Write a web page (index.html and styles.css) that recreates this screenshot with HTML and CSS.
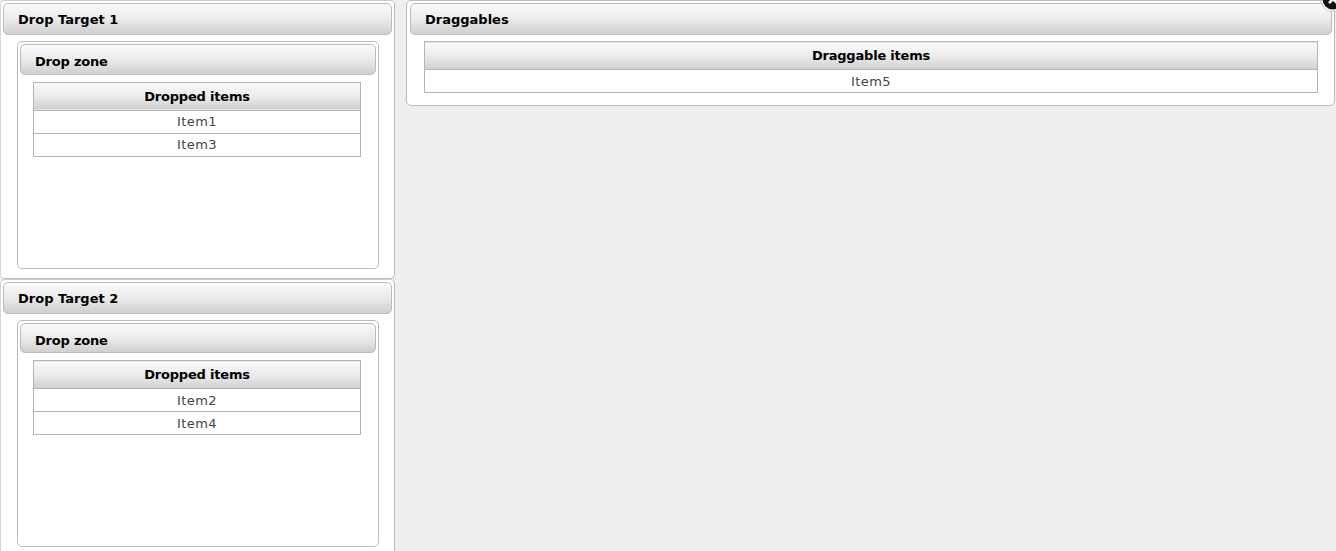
FILE: index.html
```html
<!DOCTYPE html>
<html lang="en">
<head>
	<meta charset="UTF-8" />
	<title>Drag and drop</title>
	<link rel="stylesheet" href="styles.css">
</head>
<body>
	<div class="left-column">
		<div class="panel target-panel">
			<div class="panel-header">Drop Target 1</div>
			<div class="zone-panel">
				<div class="panel-header zone-header">Drop zone</div>
				<table class="item-table">
					<tr><th>Dropped items</th></tr>
					<tr><td>Item1</td></tr>
					<tr><td>Item3</td></tr>
				</table>
			</div>
		</div>
		<div class="panel target-panel">
			<div class="panel-header">Drop Target 2</div>
			<div class="zone-panel">
				<div class="panel-header zone-header">Drop zone</div>
				<table class="item-table">
					<tr><th>Dropped items</th></tr>
					<tr><td>Item2</td></tr>
					<tr><td>Item4</td></tr>
				</table>
			</div>
		</div>
	</div>

	<div class="panel source-panel">
		<div class="panel-header">Draggables</div>
		<table class="item-table source-table">
			<tr><th>Draggable items</th></tr>
			<tr><td>Item5</td></tr>
		</table>
	</div>

	<svg class="close-icon" width="24" height="20" viewBox="0 0 24 20">
		<circle cx="21" cy="-1" r="13" fill="#bbb" opacity="0.5" />
		<circle cx="21" cy="-1" r="11.5" fill="#fff" />
		<circle cx="21" cy="-1" r="10.5" fill="#111" />
		<path d="M17 3 L25 -5 M17 -5 L25 3" stroke="#fff" stroke-width="2.6" />
	</svg>
</body>
</html>
```

FILE: styles.css
```css
html, body {
	height: 100%;
	margin: 0;
	overflow: hidden;
}
body {
	display: flex;
	align-items: flex-start;
	gap: 11px;
	box-sizing: border-box;
	height: 551px;
	background-color: #eeeff1;
	font-family: "DejaVu Sans", Verdana, sans-serif;
	font-size: 13px;
	color: #000;
}
.left-column {
	display: flex;
	flex-direction: column;
	width: 395px;
	flex: none;
}
.panel {
	box-sizing: border-box;
	padding: 2px;
	background-color: #fff;
	border: 1px solid #bbb;
	border-radius: 5px;
}
.target-panel {
	height: 278.5px;
	flex: none;
	border-top-color: #ccc;
	border-left-color: #d8d8d8;
}
.source-panel {
	width: 929px;
	height: 106px;
	flex: none;
	padding: 2px 2px 2px 3px;
}
.panel-header {
	box-sizing: border-box;
	height: 32px;
	padding-left: 14px;
	line-height: 32.8px;
	font-weight: bold;
	border: 1px solid #bbb;
	border-radius: 5px;
	background: linear-gradient(to bottom, #fafafa 0%, #ebebeb 50%, #cfcfcf 100%);
}
.zone-panel {
	box-sizing: border-box;
	height: 227.5px;
	margin: 6px 13px 0 14px;
	padding: 2px;
	border: 1px solid #bbb;
	border-radius: 5px;
}
.zone-header {
	height: 30.8px;
	line-height: 33px;
	letter-spacing: -0.2px;
}
.item-table {
	width: 328px;
	margin: 7px 0 0 13px;
	border-collapse: collapse;
	table-layout: fixed;
}
.source-table {
	width: 894px;
	margin: 6px 0 0 14px;
}
.item-table th, .item-table td {
	box-sizing: border-box;
	padding: 0;
	text-align: center;
	border: 1px solid #b5b5b5;
}
.item-table th {
	height: 28px;
	font-weight: bold;
	letter-spacing: -0.2px;
	background: linear-gradient(to bottom, #fafafa 0%, #ebebeb 50%, #cfcfcf 100%);
}
.item-table td {
	height: 23px;
	letter-spacing: 0.4px;
	color: #444;
}
.close-icon {
	position: absolute;
	top: 0;
	right: 0;
}
```
